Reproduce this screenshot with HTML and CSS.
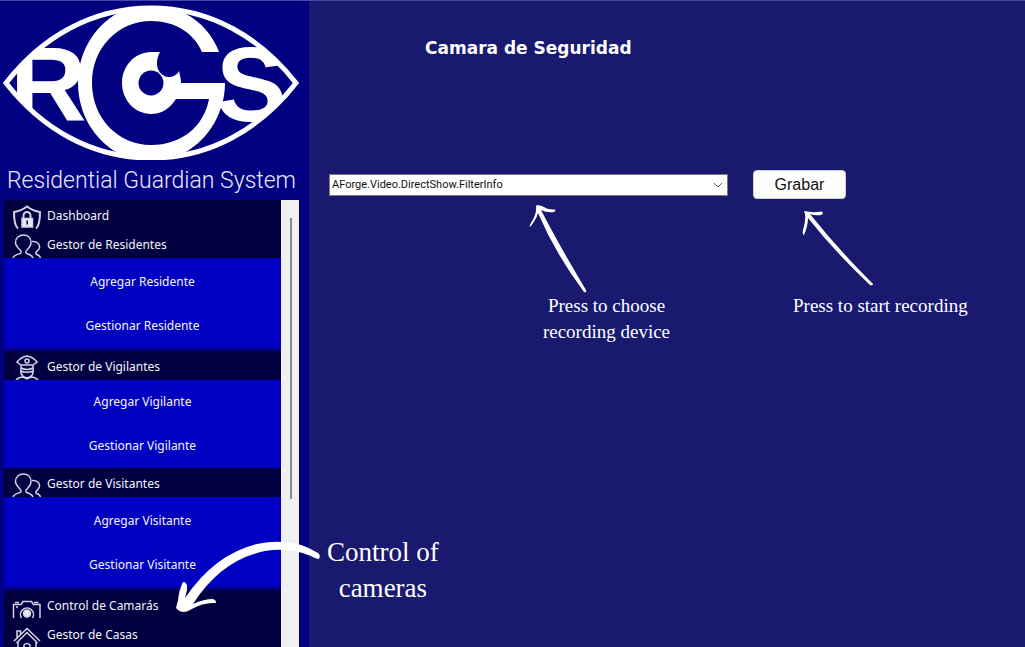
FILE: index.html
```html
<!DOCTYPE html>
<html lang="es">
<head>
<meta charset="utf-8">
<title>Residential Guardian System</title>
<link rel="stylesheet" href="styles.css">
</head>
<body>
<svg class="defs" aria-hidden="true">
  <symbol id="people" viewBox="0 0 30 25">
    <path d="M1 25C2 22 5 21.500 8 20.500C9.500 20 9.500 18.500 8 17C5.500 14.500 3.500 12 3.500 9.500C3.500 5 7 2 11.500 2S19 5 19 9.500C19 12 17.500 14.500 15 17C13.500 18.500 13.500 20 15 20.500C18 21.500 20 22 21 25M20 8.500C25 8 28 11 27.500 14.500C27.200 17 25 18 24 19.500C23.300 21 24.500 21.500 26 22Q28 23 28.500 25"/>
  </symbol>
</svg>
<div class="app">
  <aside class="sidebar">
    <svg class="logo" viewBox="0 0 300 160" role="img" aria-label="RGS">
      <text class="logo-letter" x="10" y="121">R</text>
      <text class="logo-letter" x="216" y="121">S</text>
      <path class="logo-mask" fill-rule="evenodd" d="M0 0H300V160H0ZM6 83C42 37 92 8 151 8S260 37 296 83C260 129 210 158 151 158S42 129 6 83Z"/>
      <ellipse class="logo-mask" cx="151" cy="83" rx="71" ry="72"/>
      <path class="logo-line" d="M6 83C42 37 92 8 151 8S260 37 296 83C260 129 210 158 151 158S42 129 6 83Z"/>
      <path class="logo-fill" d="M118 13C132 5 170 5 184 13C202 22 213 36 219 52H202C194 33 175 21 151 21C118 21 92 48 92 83S118 145 151 145C182 145 204 126 209 99H176C170 108 162 114 151 114C135 114 122 100 122 83S135 52 151 52H160C154 63 157 75 168 77C173 77 177 75 179 71C180 75 181 79 181 83H225C225 111 210 139 184 153C170 161 132 161 118 153C94 140 78 113 78 83S94 26 118 13Z"/>
      <circle class="logo-mask" cx="151" cy="83" r="12.500"/>
    </svg>
    <p class="brand">Residential Guardian System</p>
    <div class="menu-frame">
      <nav class="menu">
        <a class="item" href="#dashboard"><svg class="icon" viewBox="0 0 30 25"><path class="thick" d="M6 24.500C3 22 2 17 2 8Q9 7 15 2.500Q21 7 28 8C28 17 27 22 24 24.500" /><path class="thick" d="M11.500 14v-2.500a3.500 3.500 0 0 1 7 0V14"/><path class="solid" d="M10 14.500h10.500v8.500h-10.500z"/><path class="keyhole" d="M15.200 16.500v4"/></svg>Dashboard</a>
        <a class="item" href="#residentes"><svg class="icon"><use href="#people"/></svg>Gestor de Residentes</a>
        <div class="submenu tall">
          <a href="#agregar-residente">Agregar Residente</a>
          <a href="#gestionar-residente">Gestionar Residente</a>
        </div>
        <a class="item spaced" href="#vigilantes"><svg class="icon" viewBox="0 0 30 25"><path d="M9 10L5 7Q9 2 15 1Q21 2 25 7L21 10ZM9 10v3q6 3 12 0v-3M9 13q-1 7 3 9q3 1.500 6 0q4-2 3-9M9 16q6 2.500 12 0M4 25q3-3 7-3l4 2l4-2q4 0 7 3"/><circle cx="15" cy="6" r="2"/></svg>Gestor de Vigilantes</a>
        <div class="submenu">
          <a href="#agregar-vigilante">Agregar Vigilante</a>
          <a href="#gestionar-vigilante">Gestionar Vigilante</a>
        </div>
        <a class="item" href="#visitantes"><svg class="icon"><use href="#people"/></svg>Gestor de Visitantes</a>
        <div class="submenu tall">
          <a href="#agregar-visitante">Agregar Visitante</a>
          <a href="#gestionar-visitante">Gestionar Visitante</a>
        </div>
        <a class="item spaced" href="#camaras"><svg class="icon" viewBox="0 0 30 25"><path d="M1.500 24V10.500H9L11 7.500H19.500L21.500 10.500H28V24M3 8.500h4M22 8.500h4.500M9.500 24a6.500 6.500 0 1 1 11 0M4 13h2"/><circle class="solid" cx="15" cy="19.500" r="3.500"/></svg>Control de Camarás</a>
        <a class="item" href="#casas"><svg class="icon" viewBox="0 0 30 25"><path d="M2 18L15 5.500L28 18M5 14.500V8h3.500v3M4.500 20L15 9.500L25.500 20M6 19v6M24 19v6M12 25v-3q3-3 6 0v3"/></svg>Gestor de Casas</a>
      </nav>
      <div class="scroll"><div class="thumb"></div></div>
    </div>
  </aside>
  <main class="content">
    <h1>Camara de Seguridad</h1>
    <form class="controls">
      <select aria-label="Video"><option>AForge.Video.DirectShow.FilterInfo</option></select>
      <button type="button">Grabar</button>
      <figure class="note note-device">
        <svg class="arrow" viewBox="0 0 60 88"><path d="M8 0L13 1Q19 5 26 4.500Q27 6 25 7Q18 8 12 5Q30 40 57 85Q58 88 55 87Q26 48 9 8Q7 15 1 22Q0 21 2 18Q8 9 7 1Z"/></svg>
        <figcaption>Press to choose<br>recording device</figcaption>
      </figure>
      <figure class="note note-record">
        <svg class="arrow" viewBox="0 0 80 88"><path d="M2 6Q10 8 20 6.500Q22 9 19 10Q13 11 8 9Q35 43 71 79Q71 81 68 80Q33 47 6 13Q6 21 2 30Q0 30 1 25Q4 15 3 9Z"/></svg>
        <figcaption>Press to start recording</figcaption>
      </figure>
    </form>
  </main>
  <figure class="callout">
    <svg viewBox="0 0 150 80"><path d="M144 21Q141 21 136 18Q114 9 90 13Q46 22 18 66Q29 61 38 61Q42 63 41 65Q28 64 15 72Q7 77 1 70L3 62Q4 52 8 44Q13 44 12 52L10 60Q40 16 82 6Q117-1 143 15Q146 17 144 21Z"/></svg>
    <figcaption>Control of<br>cameras</figcaption>
  </figure>
</div>
</body>
</html>
```
FILE: styles.css
```css
* { box-sizing: border-box; }
body {
  margin: 0;
  background: #191970;
  color: #fff;
  font-family: "Noto Sans", sans-serif;
}
.defs { position: absolute; width: 0; height: 0; }
.app {
  position: relative;
  display: flex;
  height: 100vh;
  overflow: hidden;
  border-top: 1px solid #4848a0;
}
.sidebar {
  flex: none;
  width: 309px;
  display: flex;
  flex-direction: column;
  background: #000080;
  padding: 0 10px 0 4px;
}
.logo { display: block; width: 300px; margin: -1px 0 0 -4px; flex: none; }
.logo-letter { font: bold 106px "Liberation Sans", sans-serif; fill: #fff; }
.logo-mask { fill: #000080; }
.logo-line { fill: none; stroke: #fff; stroke-width: 5; }
.logo-fill { fill: #fff; }
.brand {
  margin: 0;
  height: 40px;
  line-height: 42px;
  font-family: Roboto, sans-serif;
  font-weight: 300;
  font-size: 23px;
  white-space: nowrap;
  text-align: center;
  color: #e8e8fa;
}
.menu-frame { flex: 1; display: flex; min-height: 0; }
.menu { flex: 1; overflow: hidden; }
.menu a { color: #f4f4fa; text-decoration: none; font-size: 12px; }
.item {
  display: flex;
  align-items: center;
  gap: 5px;
  height: 29px;
  padding: 2px 8px 0;
  background: #000040;
}
.spaced { margin-top: 3px; }
.item .icon {
  width: 30px;
  height: 25px;
  align-self: flex-end;
  fill: none;
  stroke: #d4d4e4;
  stroke-width: 1.5;
}
.icon .solid { fill: #e8e8f0; }
.icon .thick { stroke-width: 2; }
.icon .keyhole { stroke: #000040; }
.submenu { display: grid; background: #0000c0; }
.submenu.tall { padding-top: 2px; }
.submenu a { line-height: 44px; text-align: center; }
.scroll { width: 18px; background: #f0f0f0; padding-top: 18px; }
.thumb { width: 2px; height: 281px; margin-left: 9px; background: #8a8a8a; }
.content { flex: 1; min-width: 0; padding: 35px 0 0 20px; }
h1 {
  margin: 0 0 110px;
  padding-left: 96px;
  font: bold 17px/24px "DejaVu Sans", sans-serif;
}
.controls {
  display: grid;
  grid-template-columns: minmax(0, 399fr) minmax(0, 93fr) minmax(0, 154fr);
  column-gap: 25px;
  align-items: center;
}
select {
  grid-area: 1 / 1;
  height: 22px;
  padding: 0 2px;
  border: 1px solid #7a7a7a;
  border-radius: 0;
  appearance: none;
  background: #fff url("data:image/svg+xml,%3Csvg xmlns='http://www.w3.org/2000/svg' width='10' height='6'%3E%3Cpath d='M1 1l4 4 4-4' fill='none' stroke='%23606060'/%3E%3C/svg%3E") no-repeat right 4px center;
  color: #111;
  font: 11px Roboto, sans-serif;
}
button {
  grid-area: 1 / 2;
  height: 29px;
  border: 1px solid #d0d0d0;
  border-radius: 4px;
  padding: 0;
  background: #fdfdfd;
  color: #111;
  font: 16px "Liberation Sans", sans-serif;
}
figure { margin: 0; }
figcaption { font-family: "Liberation Serif", serif; text-align: center; }
.arrow { display: block; fill: #fff; }
.note { padding-top: 6px; align-self: start; white-space: nowrap; }
.note figcaption { font-size: 19px; line-height: 26px; }
.note-device { grid-area: 2 / 1; justify-self: center; width: 156px; margin-left: 156px; }
.note-device .arrow { width: 60px; }
.note-record { grid-area: 2 / 2 / 3 / 4; width: 174px; margin-left: 40px; }
.note-record .arrow { width: 80px; margin-left: 9px; }
.callout {
  position: absolute;
  left: 175px;
  top: 537px;
  display: flex;
  gap: 2px;
}
.callout svg { width: 150px; height: 80px; fill: #fff; }
.callout figcaption { font-size: 27px; line-height: 36px; margin-top: -4px; }
```
